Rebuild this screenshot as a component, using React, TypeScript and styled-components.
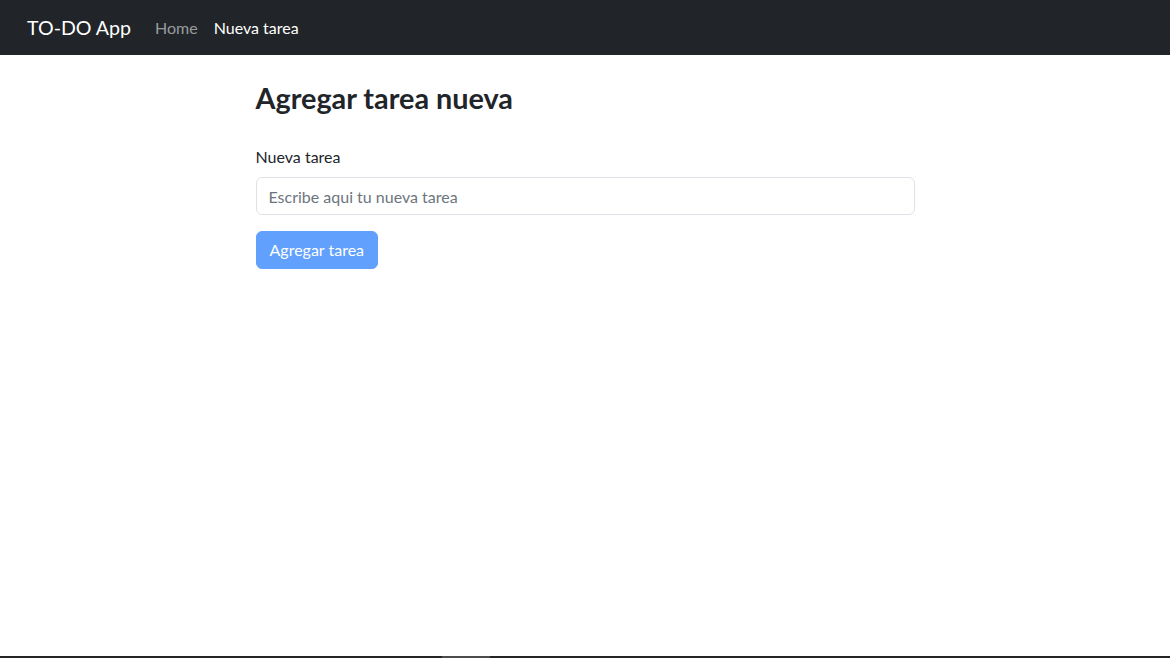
import styled, { createGlobalStyle } from "styled-components";

const GlobalStyle = createGlobalStyle`
  *, *::before, *::after {
    box-sizing: border-box;
  }
  body {
    margin: 0;
    font-family: "Segoe UI", Lato, "Noto Sans", sans-serif;
    font-size: 16px;
    line-height: 1.5;
    color: #212529;
    background: #fff;
  }
`;

const Page = styled.div`
  height: 100vh;
  display: flex;
  flex-direction: column;
`;

const Navbar = styled.nav`
  height: 55px;
  background-color: #212529;
  display: flex;
  align-items: center;
  padding: 0 27px;
`;

const Brand = styled.a`
  font-size: 19.6px;
  color: #fff;
  margin-right: 16px;
  text-decoration: none;
`;

const NavList = styled.ul`
  display: flex;
  list-style: none;
  margin: 0;
  padding: 0;
`;

const NavLink = styled.a<{ $active?: boolean }>`
  display: block;
  padding: 8px;
  font-size: 16px;
  text-decoration: none;
  color: ${(p) => (p.$active ? "#fff" : "rgba(255, 255, 255, 0.55)")};
`;

const Main = styled.main`
  flex: 1;
  display: flex;
  justify-content: center;
  padding-top: 24px;
`;

const Content = styled.div`
  width: 659px;
`;

const Title = styled.h2`
  margin: 0 0 28px;
  font-size: 28.8px;
  font-weight: 700;
  line-height: 38px;
`;

const Field = styled.div`
  margin-bottom: 16px;
`;

const Label = styled.label`
  display: inline-block;
  margin-bottom: 8px;
`;

const Input = styled.input`
  display: block;
  width: 100%;
  height: 38px;
  padding: 6px 12px;
  font: inherit;
  color: #212529;
  border: 1px solid #dee2e6;
  border-radius: 6px;
  outline: none;

  &::placeholder {
    color: #6c757d;
  }
`;

const Button = styled.button`
  height: 38px;
  padding: 6px 13px;
  font: inherit;
  color: #fff;
  background-color: #0d6efd;
  border: 1px solid #0d6efd;
  border-radius: 6px;
  opacity: 0.65;
`;

const BottomBar = styled.div`
  height: 2px;
  background: #252525;
  display: flex;
  padding-left: 442px;
`;

const BottomThumb = styled.div`
  width: 48px;
  background: #4c4c4c;
`;

export default function App() {
  return (
    <>
      <GlobalStyle />
      <Page>
        <Navbar>
          <Brand href="#">TO-DO App</Brand>
          <NavList>
            <li>
              <NavLink href="#">Home</NavLink>
            </li>
            <li>
              <NavLink href="#" $active>
                Nueva tarea
              </NavLink>
            </li>
          </NavList>
        </Navbar>
        <Main>
          <Content>
            <Title>Agregar tarea nueva</Title>
            <form onSubmit={(e) => e.preventDefault()}>
              <Field>
                <Label htmlFor="tarea">Nueva tarea</Label>
                <Input id="tarea" placeholder="Escribe aqui tu nueva tarea" />
              </Field>
              <Button type="submit" disabled>
                Agregar tarea
              </Button>
            </form>
          </Content>
        </Main>
        <BottomBar>
          <BottomThumb />
        </BottomBar>
      </Page>
    </>
  );
}
